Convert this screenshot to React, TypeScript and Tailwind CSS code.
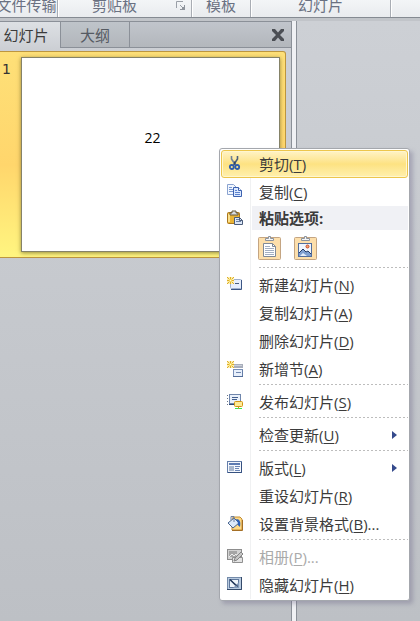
import React from "react";

type MenuItemProps = {
  label: string;
  hotkey: string;
  suffix?: string;
  icon?: React.ReactNode;
  submenu?: boolean;
  disabled?: boolean;
  active?: boolean;
};

function Sparkle() {
  return (
    <g>
      <path d="M0 0h7v7H0z" fill="#fbeeb0" />
      <path d="M0 0h1v1H0zM3 0h1v2H3zM6 0h1v1H6zM1 1h1v1H1zM5 1h1v1H5zM0 3h2v1H0zM5 3h2v1H5zM1 5h1v1H1zM5 5h1v1H5zM0 6h1v1H0zM3 5h1v2H3zM6 6h1v1H6z" fill="#dfae2a" />
      <path d="M2 2h3v3H2z" fill="#f7d95f" />
      <path d="M3 3h1v1H3z" fill="#fffbe0" />
    </g>
  );
}

function Icon({ children }: { children: React.ReactNode }) {
  return (
    <svg width="16" height="16" viewBox="0 0 16 16" fill="none" aria-hidden="true">
      {children}
    </svg>
  );
}

const CutIcon = (
  <Icon>
    <path d="M4.500 0v3l4 6" stroke="#6f8199" strokeWidth="1.6" />
    <path d="M10.500 0v3l-4 6" stroke="#4d607c" strokeWidth="1.6" />
    <path d="M7 5.500h1.500v3H7z" fill="#34465f" />
    <ellipse cx="4.800" cy="11" rx="2" ry="2" stroke="#2f5cab" strokeWidth="1.8" />
    <ellipse cx="10.200" cy="11" rx="2" ry="2" stroke="#2f5cab" strokeWidth="1.8" />
  </Icon>
);

const CopyIcon = (
  <Icon>
    <path d="M.5.500h6l3 3v7h-9z" fill="#f2f7ff" stroke="#8aa3d0" />
    <path d="M2 3.500h3M2 5.500h4M2 7.500h4" stroke="#7796cf" />
    <path d="M6.500 3.500h5l3 3v6h-8z" fill="#dce9ff" stroke="#3c62b0" />
    <path d="M11.500 3.500v3h3" fill="#fff" stroke="#3c62b0" />
    <path d="M8 6.500h2M8 8.500h5M8 10.500h5" stroke="#5d83ce" />
  </Icon>
);

const PasteIcon = (
  <Icon>
    <rect x=".5" y="2.500" width="12" height="11" rx="1" fill="#eab436" stroke="#a87620" />
    <path d="M2 4v8" stroke="#fbe08b" strokeWidth="2" />
    <path d="M3 5V3h2V1h4v2h2v2z" fill="#d8dce2" stroke="#66583b" />
    <path d="M7.500 7.500h5l3 3v4h-8z" fill="#dbe6f7" stroke="#4b5c7a" />
    <path d="M9 9.500h3M9 11.500h5" stroke="#6d82a5" />
    <path d="M12.500 7.500v3h3" stroke="#4b5c7a" />
  </Icon>
);

const NewSlideIcon = (
  <Icon>
    <rect x="3.500" y="2.500" width="11" height="9" rx="1" fill="#e6eefb" stroke="#9fb0cc" />
    <path d="M4 12.500h10.500V3" stroke="#3b5685" />
    <path d="M8 6.500h4" stroke="#475d80" />
    <Sparkle />
  </Icon>
);

const NewSectionIcon = (
  <Icon>
    <path d="M6 3h10v4H6z" fill="#a8aebb" />
    <path d="M7 4.500h8" stroke="#cbd0d9" />
    <rect x="6.500" y="8.500" width="9" height="7" fill="#e7effb" stroke="#7990b8" />
    <path d="M9 11.500h5" stroke="#6f87b0" />
    <path d="M6 15.500h10V9" stroke="#536d99" />
    <Sparkle />
  </Icon>
);

const PublishIcon = (
  <Icon>
    <path d="M.5 1v11" stroke="#66738a" strokeDasharray="1 2" />
    <rect x="2.500" y=".5" width="11" height="9" fill="#eaf1fb" stroke="#6f86ac" />
    <path d="M5 3.500h6M5 5.500h5" stroke="#435f8e" />
    <path d="M2 10.500h6" stroke="#2d4773" />
    <rect x="7.500" y="7.500" width="8" height="5" rx="1" fill="#ffeb96" stroke="#d39512" />
    <path d="M11 13h1v2h-1z" fill="#c39938" />
    <path d="M8 14.500h3M12 14.500h3" stroke="#3bea4b" />
  </Icon>
);

const LayoutIcon = (
  <Icon>
    <rect x=".5" y="1.500" width="14" height="11" fill="#f5f8fd" stroke="#657fab" />
    <path d="M1 12.500h13.500V2" stroke="#365180" />
    <path d="M2 4h11" stroke="#5e7cb2" strokeWidth="2" />
    <path d="M2 6h5v5H2z" fill="#a8b7cd" />
    <path d="M8 6.500h5M8 8.500h4M8 10.500h5" stroke="#6c87b6" />
  </Icon>
);

const BackgroundIcon = (
  <Icon>
    <path d="M6 1h7l2 2v11H5V8z" fill="#ffd984" stroke="#c28d34" />
    <path d="M1 7l6-5 5 5-6 5z" fill="#dbe9fa" stroke="#47638e" />
    <path d="M4 4V.500h3V6" stroke="#6c7f9e" />
    <path d="M9 3c4 0 5 3 4 8-1-1-3-2-2-4z" fill="#2d61b8" />
    <path d="M5 14.500h10.500V4" stroke="#a56f25" />
  </Icon>
);

const AlbumIcon = (
  <Icon>
    <rect x=".5" y=".5" width="14" height="10" fill="#d3d3d3" stroke="#8d8d8d" />
    <path d="M2 2h8v6H2z" fill="#a5a5a5" />
    <path d="M2 8l3-3 2 2 2-2 2 3" stroke="#eeeeee" />
    <path d="M5.500 8.500h10v5h-10z" fill="#e3e3e3" stroke="#919191" />
    <path d="M7 12l1-3 6-6 2 2-6 6z" fill="#c5c5c5" stroke="#858585" />
  </Icon>
);

const HideIcon = (
  <Icon>
    <rect x=".5" y=".5" width="14" height="12" fill="#b9cbe0" stroke="#748baa" />
    <path d="M0 12.500h14.500V0" stroke="#344a6a" />
    <rect x="2.500" y="2.500" width="9" height="8" fill="#f0f5fb" stroke="#5f779b" />
    <path d="M3 2.500l7 7" stroke="#263b5e" strokeWidth="1.500" />
    <path d="M12 5v6H6z" fill="#8198b8" />
    <path d="M3 2.500l8 7" stroke="#263b5e" />
  </Icon>
);

function MenuItem({ label, hotkey, suffix, icon, submenu, disabled, active }: MenuItemProps) {
  return (
    <button
      type="button"
      role="menuitem"
      disabled={disabled}
      className={
        active
          ? "flex h-7 w-full items-center rounded-[3px] border border-[#edc64c] bg-linear-to-b from-[#fff3c6] via-[#fde282] to-[#fff0ad] text-left text-[#3b3b3b] shadow-[inset_0_0_0_1px_#fff6cf]"
          : "flex h-7 w-full items-center border border-transparent text-left text-[#3b3b3b] disabled:text-[#aaaaaa]"
      }
    >
      <span className="flex w-[37px] shrink-0 pl-[5px]">{icon}</span>
      <span className="grow whitespace-nowrap">
        {label}(<span className="underline underline-offset-2">{hotkey}</span>){suffix}
      </span>
      {submenu && (
        <svg className="mr-2.5" width="5" height="8" viewBox="0 0 5 8" aria-hidden="true">
          <path d="M0 0l5 4-5 4z" fill="#354a8c" />
        </svg>
      )}
    </button>
  );
}

function Separator() {
  return (
    <div role="separator" className="h-[5px] pt-px pl-[38px]">
      <div className="h-px bg-[repeating-linear-gradient(90deg,#bdbdbd_0_2px,transparent_2px_4px)]" />
    </div>
  );
}

function PasteOption({ label, children }: { label: string; children: React.ReactNode }) {
  return (
    <button type="button" aria-label={label} className="h-6 w-6">
      <svg width="24" height="24" viewBox="0 0 24 24" fill="none" aria-hidden="true">
        <rect x=".5" y="1.500" width="22" height="22" rx="1" fill="#fddfab" stroke="#c4a582" />
        <path d="M7.500 4.500v-2h3v-2h2v2h3v2z" fill="#f4f5f6" stroke="#8b929d" />
        {children}
      </svg>
    </button>
  );
}

function ContextMenu() {
  return (
    <div
      role="menu"
      className="absolute top-[148px] left-[219px] w-[191px] rounded-[3px] border border-[#a4a7ad] bg-white p-px text-[15px] leading-6 shadow-[3px_3px_4px_rgba(100,95,130,0.35)]"
    >
      <div className="bg-linear-to-r from-transparent from-[29px] via-[#e1e3e5] via-[29px] to-transparent to-[30px]">
        <MenuItem label="剪切" hotkey="T" icon={CutIcon} active />
        <MenuItem label="复制" hotkey="C" icon={CopyIcon} />
        <div className="flex h-6 items-center">
          <span className="w-[31px] shrink-0 pl-1.5">{PasteIcon}</span>
          <span className="grow bg-[#f0f1f5] pl-[7px] font-bold text-[#3b3b3b]">粘贴选项:</span>
        </div>
        <div className="flex h-9 items-center gap-3 pl-[37px]">
          <PasteOption label="使用目标主题">
            <path d="M5.500 7.500h9l3 3v10h-12z" fill="#ffffff" stroke="#7f8997" />
            <path d="M14.500 7.500v3h3" stroke="#7f8997" />
            <path d="M7 10.500h5M7 12.500h9M7 14.500h9M7 16.500h9M7 18.500h9" stroke="#a3afc2" />
          </PasteOption>
          <PasteOption label="图片">
            <rect x="4.500" y="7.500" width="13" height="13" fill="#f1f6fe" stroke="#536e9c" />
            <path d="M5 20v-3l4-4 3 3 2-1 3 3v2z" fill="#7f9fd0" />
            <path d="M5 17l4-4 3 3 2-1 3 3" stroke="#263c66" />
            <path d="M6 20l3-3 4 3z" fill="#e3edfb" />
            <circle cx="13.500" cy="10.500" r="1.500" fill="#f7a071" stroke="#c64c26" />
          </PasteOption>
        </div>
        <Separator />
        <MenuItem label="新建幻灯片" hotkey="N" icon={NewSlideIcon} />
        <MenuItem label="复制幻灯片" hotkey="A" />
        <MenuItem label="删除幻灯片" hotkey="D" />
        <MenuItem label="新增节" hotkey="A" icon={NewSectionIcon} />
        <Separator />
        <MenuItem label="发布幻灯片" hotkey="S" icon={PublishIcon} />
        <Separator />
        <MenuItem label="检查更新" hotkey="U" submenu />
        <Separator />
        <MenuItem label="版式" hotkey="L" icon={LayoutIcon} submenu />
        <MenuItem label="重设幻灯片" hotkey="R" />
        <MenuItem label="设置背景格式" hotkey="B" suffix="..." icon={BackgroundIcon} />
        <Separator />
        <MenuItem label="相册" hotkey="P" suffix="..." icon={AlbumIcon} disabled />
        <MenuItem label="隐藏幻灯片" hotkey="H" icon={HideIcon} />
      </div>
    </div>
  );
}

function Ribbon() {
  const group = "flex shrink-0 items-center justify-center border-r border-[#a9adb4] shadow-[1px_0_0_#ffffff]";
  return (
    <header className="flex h-[18px] shrink-0 overflow-hidden border-b border-[#858a92] bg-linear-to-b from-[#f3f5f7] to-[#e9ebee] text-[15px] leading-6 whitespace-nowrap text-[#6a7182]">
      <div className="-mt-2 flex h-[26px] grow">
        <div className={`${group} w-[58px] pr-1`}>
          <span>文件传输</span>
        </div>
        <div className={`${group} relative w-[134px]`}>
          <span className="pr-5">剪贴板</span>
          <svg className="absolute right-1.5 bottom-2" width="9" height="9" viewBox="0 0 9 9" fill="none" aria-hidden="true">
            <path d="M.5 7V.500H7" stroke="#9a9fa7" />
            <path d="M4 4l3 3" stroke="#9a9fa7" />
            <path d="M9 4v5H4V8h2V6h2V4z" fill="#8f949c" />
          </svg>
        </div>
        <div className={`${group} w-[59px]`}>模板</div>
        <div className={`${group} w-[140px]`}>幻灯片</div>
      </div>
    </header>
  );
}

function SlidePane() {
  return (
    <aside className="flex w-[292px] shrink-0 flex-col border-t border-r border-[#8b9098] bg-linear-to-b from-[#cdd0d5] to-[#bdc0c5]">
      <div role="tablist" className="flex h-[26px] shrink-0 text-[15px] leading-6">
        <button type="button" role="tab" aria-selected="true" className="w-[61px] border-r border-[#8b9098] bg-linear-to-b from-[#dde0e4] to-[#cdd0d5] pr-2 text-[#3b3b3b]">
          幻灯片
        </button>
        <button type="button" role="tab" aria-selected="false" className="w-[69px] border-r border-b border-[#8b9098] bg-linear-to-b from-[#bfc4ca] to-[#b2b6bb] text-[#555a62]">
          大纲
        </button>
        <div className="flex grow items-center justify-end border-b border-[#8b9098] bg-linear-to-b from-[#c1c5cc] to-[#b3b7bc] pr-[7px]">
          <button type="button" aria-label="关闭">
            <svg width="12" height="12" viewBox="0 0 12 12" aria-hidden="true">
              <path d="M0 0h3l3 3.500L9 0h3v2L8 6l4 4v2H9L6 8.500 3 12H0v-2l4-4-4-4z" fill="#4b4e54" />
            </svg>
          </button>
        </div>
      </div>
      <div className="mt-[3px] mr-[5px] flex h-[207px] rounded-tr-[3px] border border-l-0 border-[#bd963f] bg-linear-to-b from-[#fee078] via-[#ffd66c] via-55% to-[#fff580]">
        <span className="w-[21px] shrink-0 pt-[5px] pl-[2px] font-['DejaVu_Sans'] text-[14px] leading-6 text-[#333333]">1</span>
        <div className="mt-[5px] mr-[5px] mb-[5px] flex grow items-center justify-center border border-[#858268] bg-white pb-[34px] pl-1 text-[14px] leading-6 text-black shadow-[0_1px_4px_rgba(80,70,20,0.6)]">
          22
        </div>
      </div>
    </aside>
  );
}

export default function App(): React.ReactElement {
  return (
    <div className="relative flex min-h-screen flex-col overflow-hidden bg-[#bfc3c8] font-['Open_Sans','Noto_Sans_CJK_SC',sans-serif]">
      <Ribbon />
      <div className="flex grow bg-[#c1c4c9] pt-[3px]">
        <SlidePane />
        <div className="w-[5px] shrink-0 border-r border-[#8b9098] bg-[#f0f1f4]" />
        <main className="grow bg-linear-to-b from-[#cdd0d5] to-[#bdc0c5]" />
      </div>
      <ContextMenu />
    </div>
  );
}
